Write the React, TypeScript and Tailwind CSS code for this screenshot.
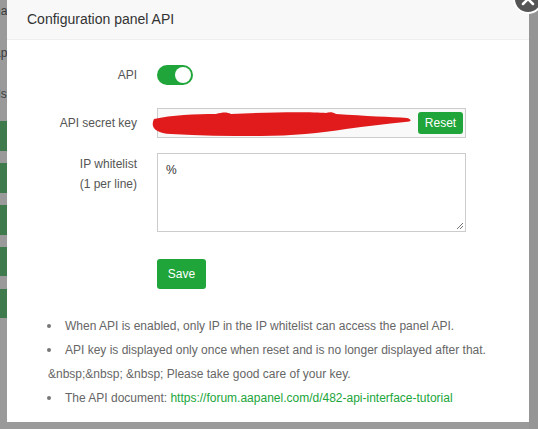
import React from "react";

const font = { fontFamily: '"Liberation Sans", Arial, sans-serif' };

function LeftStrip() {
  return (
    <div className="w-[7px] h-full overflow-hidden flex flex-col text-[12px] text-[#3a3a3a] shrink-0">
      <div className="h-[20px] mt-[1px] ml-[-6px] whitespace-nowrap leading-[20px]">na</div>
      <div className="h-[20px] mt-[22px] ml-[-6px] whitespace-nowrap leading-[20px]">ap</div>
      <div className="h-[20px] mt-[21px] ml-[-6px] whitespace-nowrap leading-[20px]">ds</div>
      <div className="h-[30px] mt-[17px] bg-[#3f7a4c]" />
      <div className="h-[30px] mt-[12px] bg-[#3f7a4c]" />
      <div className="h-[30px] mt-[12px] bg-[#3f7a4c]" />
      <div className="h-[29px] mt-[12px] bg-[#3f7a4c]" />
      <div className="h-[29px] mt-[13px] bg-[#3f7a4c]" />
    </div>
  );
}

export default function App() {
  return (
    <div
      className="relative w-[538px] h-[429px] bg-[#9a9a9a] overflow-hidden flex"
      style={font}
    >
      <LeftStrip />
      <div className="w-[522px] h-[422px] bg-white flex flex-col shrink-0">
        <div className="h-[40px] bg-[#f8f8f8] border-b border-[#eeeeee] flex items-center pl-[20px] text-[14px] text-[#333]">
          Configuration panel API
        </div>
        <div className="flex flex-col pt-[25px]">
          {/* API row */}
          <div className="flex items-center h-[20px]">
            <div className="w-[130px] text-right text-[12px] text-[#555]">API</div>
            <div className="ml-[20px] w-[36px] h-[20px] rounded-full bg-[#20a53a] flex items-center justify-end pr-[2px]">
              <div className="w-[16px] h-[16px] rounded-full bg-white" />
            </div>
          </div>
          {/* secret key row */}
          <div className="flex items-center mt-[23px] h-[30px]">
            <div className="w-[130px] text-right text-[12px] text-[#555]">API secret key</div>
            <div className="relative ml-[20px] w-[309px] h-[30px] border border-[#cccccc] bg-[#f9f9f9] flex items-center justify-end pr-[2px]">
              <svg
                className="absolute left-[-7px] top-[2px]"
                width="262"
                height="28"
                viewBox="0 0 262 28"
              >
                <path
                  d="M3 8 C20 4 45 3 65 3 C72 1 76 1 80 3 C120 1 160 1 175 2 C178 1 182 1 185 3 C215 5 240 6 256 7 C262 9 260 11 254 11 C235 13 215 15 195 18 C170 22 140 25 110 25 C80 25 50 25 20 23 C4 22 -1 16 3 8 Z"
                  fill="#e11b1b"
                />
              </svg>
              <button className="relative w-[45px] h-[22px] rounded-[3px] bg-[#20a53a] text-white text-[12px]">
                Reset
              </button>
            </div>
          </div>
          {/* whitelist row */}
          <div className="flex mt-[15px]">
            <div className="w-[130px] text-right text-[12px] text-[#555] leading-[20px] pt-[1px]">
              IP whitelist
              <br />
              (1 per line)
            </div>
            <div className="relative ml-[20px] w-[309px] h-[79px] border border-[#cccccc] bg-white text-[12px] text-[#333] pl-[8px] pt-[7px]">
              %
              <svg className="absolute right-[1px] bottom-[1px]" width="9" height="9" viewBox="0 0 9 9">
                <path d="M8 2 L2 8 M8 5 L5 8" stroke="#777" strokeWidth="1" />
              </svg>
            </div>
          </div>
          {/* save */}
          <div className="flex mt-[27px]">
            <div className="w-[150px]" />
            <button className="w-[49px] h-[30px] rounded-[3px] bg-[#20a53a] text-white text-[12px]">
              Save
            </button>
          </div>
          {/* notes */}
          <div className="mt-[25px] flex flex-col text-[12px] text-[#666] leading-[24px]">
            <div className="flex items-center pl-[40px]">
              <span className="w-[4px] h-[4px] rounded-full bg-[#777]" />
              <span className="ml-[14px]">
                When API is enabled, only IP in the IP whitelist can access the panel API.
              </span>
            </div>
            <div className="flex items-center pl-[40px]">
              <span className="w-[4px] h-[4px] rounded-full bg-[#777]" />
              <span className="ml-[14px]">
                API key is displayed only once when reset and is no longer displayed after that.
              </span>
            </div>
            <div className="pl-[41px]">&amp;nbsp;&amp;nbsp; &amp;nbsp; Please take good care of your key.</div>
            <div className="flex items-center pl-[40px]">
              <span className="w-[4px] h-[4px] rounded-full bg-[#777]" />
              <span className="ml-[14px]">
                The API document:{" "}
                <span className="text-[#20a53a]">https://forum.aapanel.com/d/482-api-interface-tutorial</span>
              </span>
            </div>
          </div>
        </div>
      </div>
      <div className="flex-1 bg-[#959595]" />
      <div className="absolute left-[513px] top-[-16px] w-[30px] h-[30px] rounded-full bg-[#555] border-2 border-white flex items-center justify-center">
        <svg width="14" height="14" viewBox="0 0 14 14">
          <path d="M2 2 L12 12 M12 2 L2 12" stroke="white" strokeWidth="2.5" strokeLinecap="round" />
        </svg>
      </div>
    </div>
  );
}
